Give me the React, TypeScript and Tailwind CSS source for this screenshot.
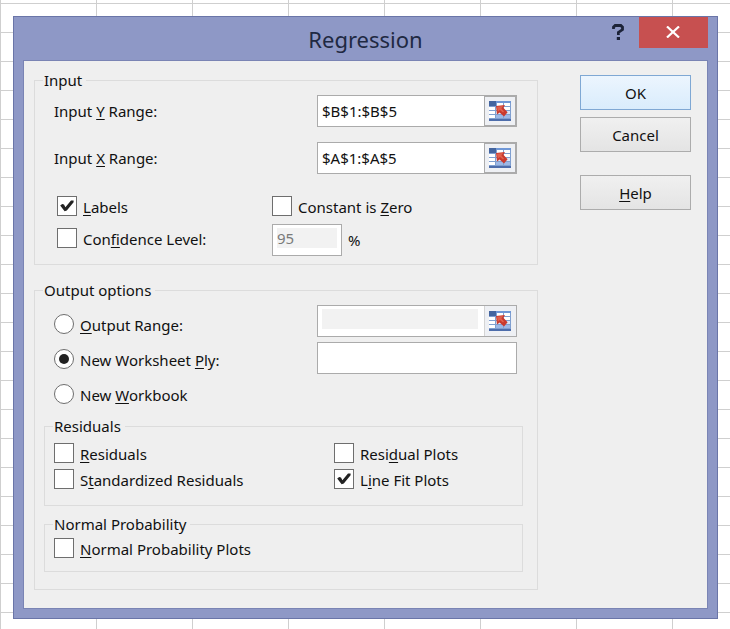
import { useState, type InputHTMLAttributes, type ReactNode } from "react";
import clsx from "clsx";

type Output = "range" | "worksheet" | "workbook";

function CheckBox({ id, checked, children }: { id: string; checked?: boolean; children: ReactNode }) {
  return (
    <label htmlFor={id} className="flex items-center gap-1.5">
      <span className="relative size-5 shrink-0">
        <input
          id={id}
          type="checkbox"
          defaultChecked={checked}
          className="peer block size-5 appearance-none border border-[#6e6e6e] bg-white"
        />
        <svg
          viewBox="0 0 20 20"
          className="pointer-events-none absolute inset-0 hidden size-5 peer-checked:block"
        >
          <path
            d="M3.2 9.6 5.2 8 7 8.6 8.4 11.2 14 4.4 16.6 4.6 16.6 6.2 9.8 14.6 7.6 15.2Z"
            fill="#222"
          />
        </svg>
      </span>
      <span className="pt-0.5 leading-[18px]">{children}</span>
    </label>
  );
}

function Radio({
  id,
  checked,
  onSelect,
  children,
}: {
  id: string;
  checked: boolean;
  onSelect: () => void;
  children: ReactNode;
}) {
  return (
    <label htmlFor={id} className="flex items-center gap-1.5">
      <span className="relative size-5 shrink-0">
        <input
          id={id}
          type="radio"
          name="output"
          checked={checked}
          onChange={onSelect}
          className="peer block size-5 appearance-none rounded-full border border-[#6e6e6e] bg-white"
        />
        <span className="pointer-events-none absolute inset-[5px] hidden rounded-full bg-[#222] peer-checked:block" />
      </span>
      <span className="pt-0.5 leading-[18px]">{children}</span>
    </label>
  );
}

function SheetIcon() {
  return (
    <svg viewBox="0 0 22 20" className="h-5 w-[22px]" aria-hidden="true">
      <rect width="22" height="20" fill="#7f9fd0" />
      <rect width="22" height="2" fill="#6f97d6" />
      <rect width="7" height="5" fill="#44659f" />
      <g fill="#fff">
        <rect x="8" y="2" width="6" height="3" />
        <rect x="15" y="2" width="6" height="3" />
        <rect y="6" width="6" height="3" />
        <rect x="7" y="6" width="7" height="3" />
        <rect x="15" y="6" width="6" height="3" />
        <rect y="10" width="6" height="3" />
        <rect y="14" width="6" height="3" />
      </g>
      <g fill="#dbe5f6">
        <rect x="7" y="10" width="7" height="3" />
        <rect x="15" y="10" width="6" height="3" />
      </g>
      <g fill="#9db8e6">
        <rect x="7" y="14" width="7" height="3" />
        <rect x="15" y="14" width="6" height="3" />
      </g>
      <rect y="18" width="22" height="2" fill="#4d6dab" />
      <path d="M7 5 16 4 14.4 6.8 18.6 11.2 15 15.4 10.6 11.4 8 13.4Z" fill="#c93a2e" />
      <path d="M8 5.8 14 5 12.4 7.6 15 10.5 14 11.5 11 9 8.8 10.5Z" fill="#e2604c" />
    </svg>
  );
}

function RangeInput({
  pickerLabel,
  ...props
}: { pickerLabel: string } & InputHTMLAttributes<HTMLInputElement>) {
  return (
    <div className="flex h-8 w-[200px] border border-[#ababab] bg-white">
      <div className={clsx("flex-1", props.disabled && "pt-[3px] pr-1.5 pb-[7px] pl-1")}>
        <input
          type="text"
          className="block size-full bg-white px-1 outline-none disabled:bg-[#f2f2f2]"
          {...props}
        />
      </div>
      <button
        type="button"
        aria-label={pickerLabel}
        className={clsx(
          "flex w-8 items-center justify-center bg-[#eef0f4]",
          props.disabled ? "border-l border-[#d4d4d4] pr-0.5" : "border border-[#ababab]",
        )}
      >
        <SheetIcon />
      </button>
    </div>
  );
}

function Group({
  title,
  className,
  children,
}: {
  title: string;
  className?: string;
  children: ReactNode;
}) {
  return (
    <fieldset className={clsx("min-w-0 border border-[#dcdcdc]", className)}>
      <legend className="ml-2 pr-1 pl-px leading-5">{title}</legend>
      {children}
    </fieldset>
  );
}

function DialogButton({ primary, children }: { primary?: boolean; children: ReactNode }) {
  return (
    <button
      type="button"
      className={clsx(
        "h-[35px] w-full border bg-linear-to-b",
        primary
          ? "border-[#7fa8d4] from-[#ecf5fe] to-[#d9ecfc]"
          : "border-[#acacac] from-[#f0f0f0] to-[#e4e4e4]",
      )}
    >
      {children}
    </button>
  );
}

export default function App() {
  const [output, setOutput] = useState<Output>("worksheet");

  return (
    <div className="min-h-screen bg-white bg-[linear-gradient(to_right,#cfcfcf_1px,transparent_1px),linear-gradient(to_bottom,#cfcfcf_1px,transparent_1px)] bg-[size:96px_29px] bg-[position:0_3px] pt-4 pr-3 pb-[11px] pl-[13px] font-['Noto_Sans',sans-serif] text-[15px] leading-5 text-[#111] [&_u]:underline-offset-2">
      <div
        role="dialog"
        aria-labelledby="title"
        className="border border-[#6a75a8] bg-[#8e98c6] px-[9px] pb-[9px]"
      >
        <header className="grid h-[43px] grid-cols-[1fr_auto_1fr] items-start">
          <h1 id="title" className="col-start-2 pt-1.5 text-[22px] leading-8 text-[#1f2942]">
            Regression
          </h1>
          <div className="flex justify-end">
            <button type="button" aria-label="Help" className="flex h-[30px] w-[42px] items-center justify-center">
              <svg viewBox="0 0 12 16" className="h-4 w-3">
                <path
                  d="M1.5 5V3.2L3.2 1.5H8.8L10.5 3.2V5.6L6.4 8.4V11"
                  fill="none"
                  stroke="#1c2338"
                  strokeWidth="2.8"
                />
                <rect x="4.8" y="13" width="3.2" height="3" fill="#1c2338" />
              </svg>
            </button>
            <button
              type="button"
              aria-label="Close"
              className="flex h-[31px] w-[69px] items-center justify-center bg-[#c75050] pr-0.5 pb-0.5"
            >
              <svg viewBox="0 0 14 12" className="h-3 w-3.5">
                <path d="M1 .5 13 11.5M13 .5 1 11.5" stroke="#fff" strokeWidth="2.2" />
              </svg>
            </button>
          </div>
        </header>

        <main className="flex gap-[42px] border border-[#7a84b4] bg-[#efefef] pr-4 pl-2.5">
          <div className="min-w-0 flex-1 pt-[9px] pb-[18px]">
            <Group title="Input">
              <div className="flex flex-col gap-[15px] pt-[5px] pr-5 pl-[19px]">
                <div className="flex items-center justify-between">
                  <label htmlFor="y-range">
                    Input <u>Y</u> Range:
                  </label>
                  <RangeInput id="y-range" pickerLabel="Select Y range" defaultValue="$B$1:$B$5" />
                </div>
                <div className="flex items-center justify-between">
                  <label htmlFor="x-range">
                    Input <u>X</u> Range:
                  </label>
                  <RangeInput id="x-range" pickerLabel="Select X range" defaultValue="$A$1:$A$5" />
                </div>
              </div>
              <div className="grid grid-cols-[215px_1fr] gap-y-2 pt-[22px] pr-5 pb-2 pl-[22px]">
                <CheckBox id="labels" checked>
                  <u>L</u>abels
                </CheckBox>
                <CheckBox id="zero">
                  Constant is <u>Z</u>ero
                </CheckBox>
                <div className="pt-1">
                  <CheckBox id="confidence">
                    Con<u>f</u>idence Level:
                  </CheckBox>
                </div>
                <div className="flex items-center gap-1.5">
                  <div className="h-8 w-[70px] border border-[#ababab] bg-white px-1 pt-[3px] pb-[7px]">
                    <input
                      id="level"
                      type="text"
                      aria-label="Confidence level"
                      defaultValue="95"
                      disabled
                      className="block size-full bg-[#f2f2f2] text-[#7a7a7a]"
                    />
                  </div>
                  <label htmlFor="level">%</label>
                </div>
              </div>
            </Group>

            <Group title="Output options" className="mt-[15px]">
              <div className="flex justify-between pr-5 pl-[19px]">
                <div className="flex flex-col gap-[15px] pt-3.5">
                  <Radio id="out-range" checked={output === "range"} onSelect={() => setOutput("range")}>
                    <u>O</u>utput Range:
                  </Radio>
                  <Radio
                    id="out-worksheet"
                    checked={output === "worksheet"}
                    onSelect={() => setOutput("worksheet")}
                  >
                    New Worksheet <u>P</u>ly:
                  </Radio>
                  <Radio
                    id="out-workbook"
                    checked={output === "workbook"}
                    onSelect={() => setOutput("workbook")}
                  >
                    New <u>W</u>orkbook
                  </Radio>
                </div>
                <div className="flex flex-col gap-[5px] pt-[5px]">
                  <RangeInput
                    aria-label="Output range"
                    pickerLabel="Select output range"
                    disabled={output !== "range"}
                  />
                  <input
                    type="text"
                    aria-label="New worksheet name"
                    className="h-8 w-[200px] border border-[#ababab] bg-white px-1"
                  />
                </div>
              </div>

              <div className="flex flex-col gap-2 pt-3 pr-3.5 pb-[17px] pl-[9px]">
                <Group title="Residuals">
                  <div className="grid grid-cols-[280px_1fr] gap-y-1.5 pt-[7px] pb-4 pl-[9px]">
                    <CheckBox id="residuals">
                      <u>R</u>esiduals
                    </CheckBox>
                    <CheckBox id="residual-plots">
                      Resi<u>d</u>ual Plots
                    </CheckBox>
                    <CheckBox id="standardized">
                      S<u>t</u>andardized Residuals
                    </CheckBox>
                    <CheckBox id="line-fit" checked>
                      L<u>i</u>ne Fit Plots
                    </CheckBox>
                  </div>
                </Group>

                <Group title="Normal Probability">
                  <div className="pt-1 pb-[13px] pl-[9px]">
                    <CheckBox id="normal">
                      <u>N</u>ormal Probability Plots
                    </CheckBox>
                  </div>
                </Group>
              </div>
            </Group>
          </div>

          <div className="flex w-[111px] shrink-0 flex-col pt-3.5">
            <DialogButton primary>OK</DialogButton>
            <div className="mt-[7px]">
              <DialogButton>Cancel</DialogButton>
            </div>
            <div className="mt-[23px]">
              <DialogButton>
                <u>H</u>elp
              </DialogButton>
            </div>
          </div>
        </main>
      </div>
    </div>
  );
}
